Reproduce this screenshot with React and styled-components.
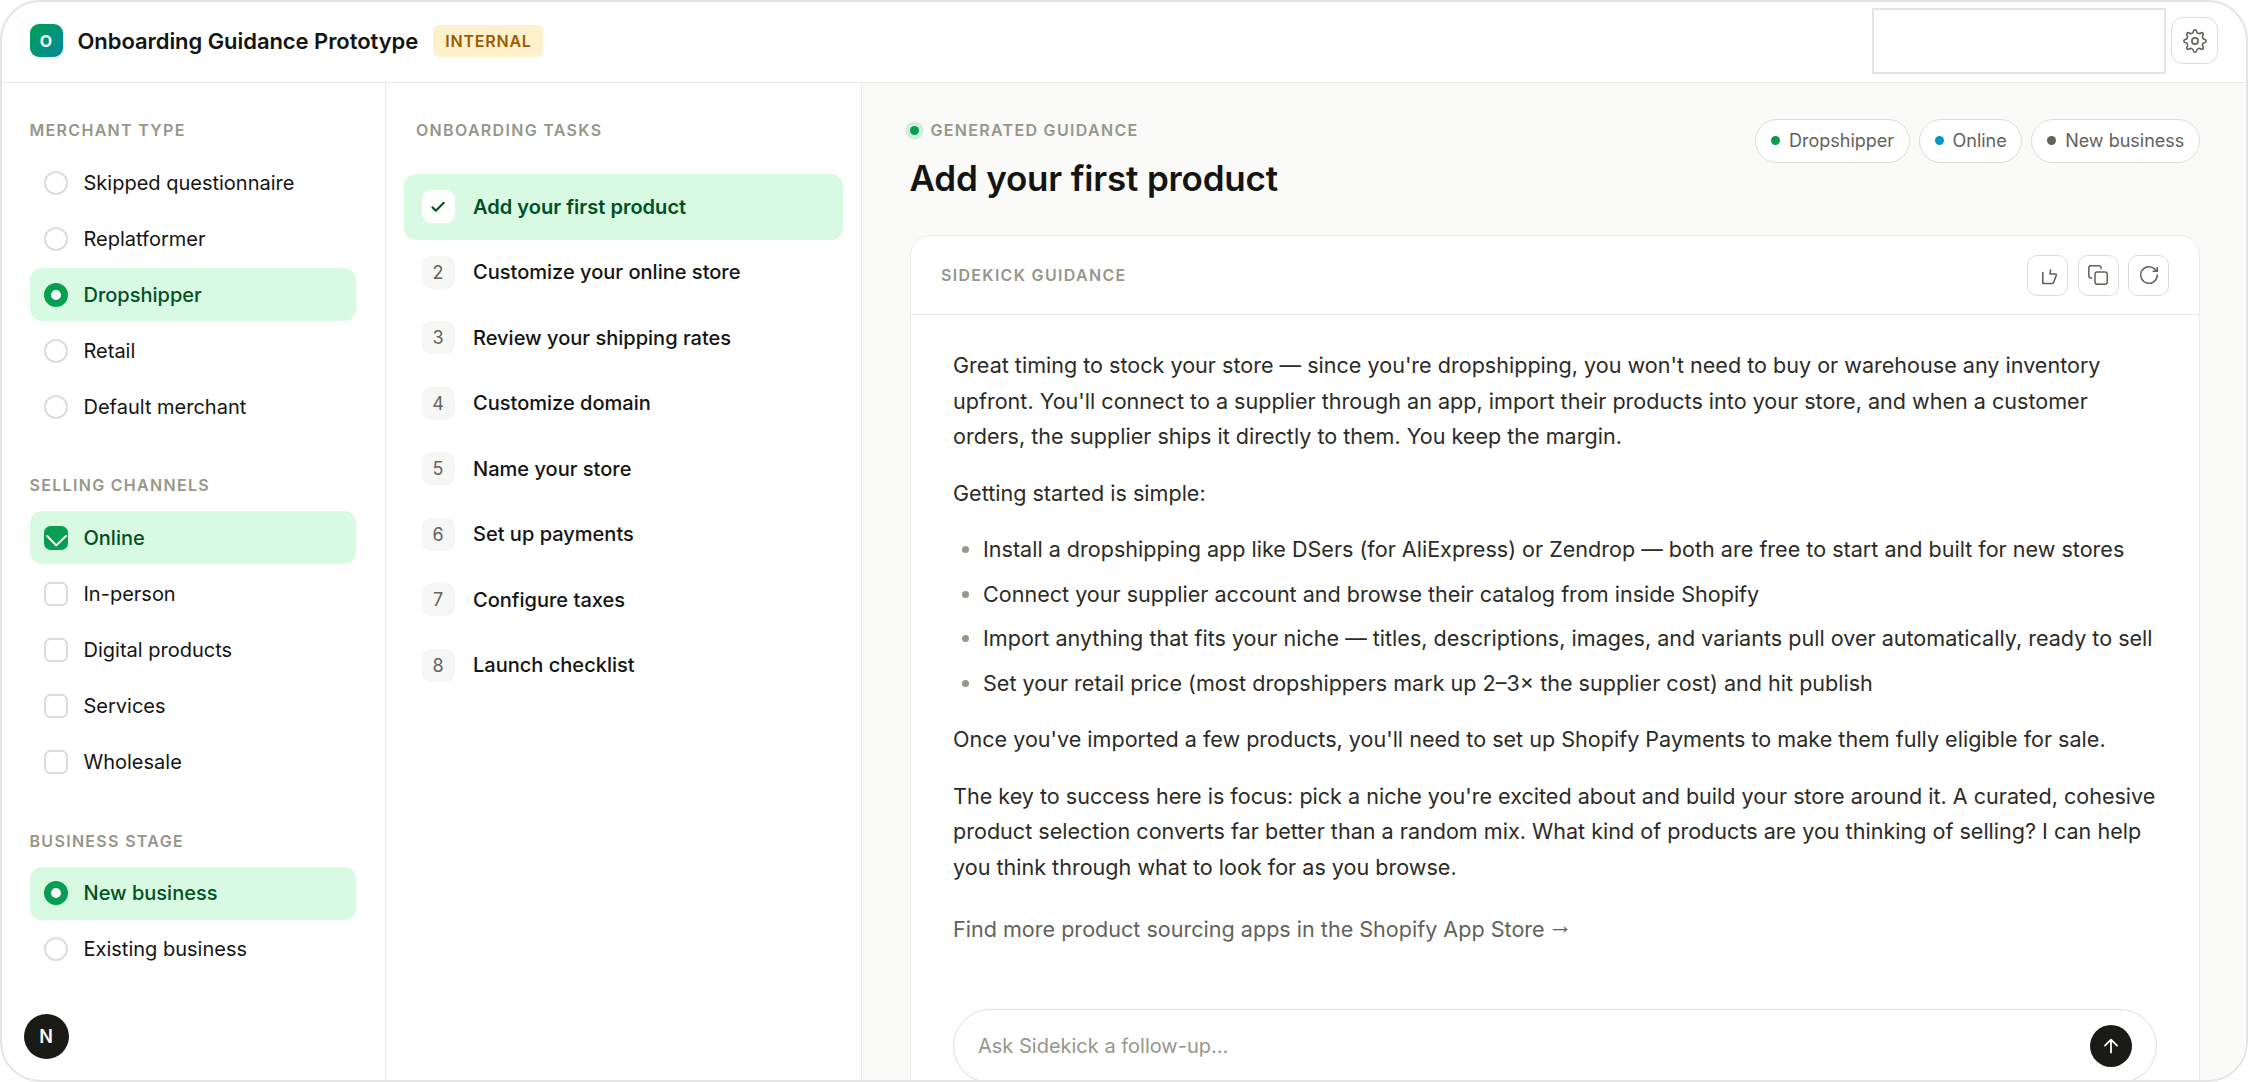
import React, { useState } from 'react';
import styled, { createGlobalStyle, css } from 'styled-components';

const merchantTypes = ['Skipped questionnaire', 'Replatformer', 'Dropshipper', 'Retail', 'Default merchant'];
const channels = ['Online', 'In-person', 'Digital products', 'Services', 'Wholesale'];
const stages = ['New business', 'Existing business'];
const tasks = [
  'Add your first product',
  'Customize your online store',
  'Review your shipping rates',
  'Customize domain',
  'Name your store',
  'Set up payments',
  'Configure taxes',
  'Launch checklist',
];

const App = () => {
  const [merchant, setMerchant] = useState('Dropshipper');
  const [selectedChannels, setSelectedChannels] = useState(['Online']);
  const [stage, setStage] = useState('New business');
  const [task, setTask] = useState(0);
  const [question, setQuestion] = useState('');

  const toggleChannel = (name) => {
    setSelectedChannels((prev) =>
      prev.includes(name) ? prev.filter((c) => c !== name) : [...prev, name]
    );
  };

  return (
    <Frame>
      <GlobalStyle />
      <Header>
        <Logo>O</Logo>
        <AppName>Onboarding Guidance Prototype</AppName>
        <InternalBadge>INTERNAL</InternalBadge>
        <HeaderSlot />
        <SettingsButton aria-label="Settings">
          <SettingsIcon />
        </SettingsButton>
      </Header>

      <Columns>
        <Sidebar>
          <Group>
            <Label>MERCHANT TYPE</Label>
            <Options>
              {merchantTypes.map((name) => (
                <Option key={name} $active={merchant === name} onClick={() => setMerchant(name)}>
                  <Radio $active={merchant === name} />
                  {name}
                </Option>
              ))}
            </Options>
          </Group>

          <Group>
            <Label>SELLING CHANNELS</Label>
            <Options>
              {channels.map((name) => (
                <Option
                  key={name}
                  $active={selectedChannels.includes(name)}
                  onClick={() => toggleChannel(name)}
                >
                  <Checkbox $active={selectedChannels.includes(name)}>
                    {selectedChannels.includes(name) && <CheckboxTick />}
                  </Checkbox>
                  {name}
                </Option>
              ))}
            </Options>
          </Group>

          <Group>
            <Label>BUSINESS STAGE</Label>
            <Options>
              {stages.map((name) => (
                <Option key={name} $active={stage === name} onClick={() => setStage(name)}>
                  <Radio $active={stage === name} />
                  {name}
                </Option>
              ))}
            </Options>
          </Group>
        </Sidebar>

        <TaskColumn>
          <TaskLabel>ONBOARDING TASKS</TaskLabel>
          <TaskList>
            {tasks.map((name, index) => (
              <Task key={name} $active={task === index} onClick={() => setTask(index)}>
                <TaskNumber $active={task === index}>
                  {task === index ? <TaskTick /> : index + 1}
                </TaskNumber>
                {name}
              </Task>
            ))}
          </TaskList>
        </TaskColumn>

        <Main>
          <MainHead>
            <div>
              <Eyebrow>
                <LiveDot />
                <Label>GENERATED GUIDANCE</Label>
              </Eyebrow>
              <Title>{tasks[task]}</Title>
            </div>
            <Chips>
              <Chip $dot="#069f52">{merchant}</Chip>
              {selectedChannels.map((name) => (
                <Chip key={name} $dot="#0098c5">{name}</Chip>
              ))}
              <Chip $dot="#62625b">{stage}</Chip>
            </Chips>
          </MainHead>

          <Card>
            <CardHead>
              <Label>SIDEKICK GUIDANCE</Label>
              <Actions>
                <ActionButton aria-label="Helpful"><ThumbIcon /></ActionButton>
                <ActionButton aria-label="Copy"><CopyIcon /></ActionButton>
                <ActionButton aria-label="Regenerate"><RefreshIcon /></ActionButton>
              </Actions>
            </CardHead>

            <CardBody>
              <p>
                Great timing to stock your store — since you're dropshipping, you won't need to buy or
                warehouse any inventory upfront. You'll connect to a supplier through an app, import
                their products into your store, and when a customer orders, the supplier ships it
                directly to them. You keep the margin.
              </p>
              <p>Getting started is simple:</p>
              <Bullets>
                <li>Install a dropshipping app like DSers (for AliExpress) or Zendrop — both are free to start and built for new stores</li>
                <li>Connect your supplier account and browse their catalog from inside Shopify</li>
                <li>Import anything that fits your niche — titles, descriptions, images, and variants pull over automatically, ready to sell</li>
                <li>Set your retail price (most dropshippers mark up 2–3× the supplier cost) and hit publish</li>
              </Bullets>
              <p>Once you've imported a few products, you'll need to set up Shopify Payments to make them fully eligible for sale.</p>
              <p>
                The key to success here is focus: pick a niche you're excited about and build your store
                around it. A curated, cohesive product selection converts far better than a random mix.
                What kind of products are you thinking of selling? I can help you think through what to
                look for as you browse.
              </p>
              <MoreLink>Find more product sourcing apps in the Shopify App Store <Arrow>→</Arrow></MoreLink>
              <AskBar>
                <AskInput
                  placeholder="Ask Sidekick a follow-up..."
                  value={question}
                  onChange={(e) => setQuestion(e.target.value)}
                />
                <SendButton aria-label="Send"><SendIcon /></SendButton>
              </AskBar>
            </CardBody>
          </Card>
        </Main>
      </Columns>

      <UserBadge>N</UserBadge>
    </Frame>
  );
};

/* Icons */
const gearPoint = (deg, radius = 10) => {
  const a = (deg * Math.PI) / 180;
  return `${(12 + radius * Math.sin(a)).toFixed(2)} ${(12 - radius * Math.cos(a)).toFixed(2)}`;
};

// eight rounded teeth, joined by concave arcs
const gearPath =
  [0, 45, 90, 135, 180, 225, 270, 315].reduce(
    (d, deg) => `${d} A1.6 1.6 0 0 1 ${gearPoint(deg + 9)} A2.6 2.6 0 0 0 ${gearPoint(deg + 36)}`,
    `M${gearPoint(-9)}`
  ) + 'Z';

const SettingsIcon = () => (
  <svg width="24" height="24" viewBox="0 0 24 24" fill="none" stroke="#62625b" strokeWidth="1.6" strokeLinejoin="round">
    <path d={gearPath} />
    <circle cx="12" cy="12" r="3.1" />
  </svg>
);

const ThumbIcon = () => (
  <svg width="20" height="20" viewBox="0 0 20 20" fill="none" stroke="#62625b" strokeWidth="1.6" strokeLinecap="round" strokeLinejoin="round">
    <path d="M4.8 7.5v11h9.4c.6 0 1.1-.4 1.3-1l2.8-7.3c.2-.7-.2-1.2-.9-1.2h-5.4l.6-4" />
  </svg>
);

const CopyIcon = () => (
  <svg width="20" height="20" viewBox="0 0 20 20" fill="none" stroke="#62625b" strokeWidth="1.5" strokeLinecap="round">
    <rect x="7" y="7" width="12.2" height="12.2" rx="2.2" />
    <path d="M3.7 13H3a2.2 2.2 0 0 1-2.2-2.2V3A2.2 2.2 0 0 1 3 .8h7.8A2.2 2.2 0 0 1 13 3v.7" />
  </svg>
);

const RefreshIcon = () => (
  <svg width="20" height="20" viewBox="0 0 20 20" fill="none" stroke="#62625b" strokeWidth="1.5" strokeLinecap="round" strokeLinejoin="round">
    <path d="M18.3 10a8.3 8.3 0 1 1-2.4-5.9l2.4 2.2" />
    <path d="M18.3 2.6v3.7h-4.1" />
  </svg>
);

const TaskTick = () => (
  <svg width="16" height="12" viewBox="0 0 16 12" fill="none" stroke="#00501f" strokeWidth="2" strokeLinecap="round" strokeLinejoin="round">
    <path d="M2.4 6.2l3.4 3.6 8-8" />
  </svg>
);

const CheckboxTick = () => (
  <svg width="24" height="24" viewBox="0 0 24 24" fill="none" stroke="#fff" strokeWidth="2" strokeLinecap="round" strokeLinejoin="round">
    <path d="M3.2 10l9 9.4 9.8-9.4" />
  </svg>
);

const SendIcon = () => (
  <svg width="16" height="16" viewBox="0 0 16 16" fill="none" stroke="#fff" strokeWidth="1.8" strokeLinecap="round" strokeLinejoin="round">
    <path d="M8 14.5V1.8M2 7.6l6-6 6 6" />
  </svg>
);

/* Styles */
const GlobalStyle = createGlobalStyle`
  * {
    box-sizing: border-box;
  }

  body {
    margin: 0;
    background: #fff;
    font-family: Inter, 'Liberation Sans', sans-serif;
    color: #141412;
  }

  button {
    font-family: inherit;
    cursor: pointer;
  }
`;

const Frame = styled.div`
  position: relative;
  display: flex;
  flex-direction: column;
  height: 1082px;
  border: 2px solid #e4e4e4;
  border-radius: 40px;
  overflow: hidden;
  background: #fff;
`;

const Header = styled.header`
  display: flex;
  align-items: center;
  flex: none;
  height: 81px;
  padding: 0 28px 2.5px 27.5px;
  border-bottom: 1.5px solid #e9e9e7;
`;

const Logo = styled.div`
  display: flex;
  align-items: center;
  justify-content: center;
  width: 33px;
  height: 33px;
  border-radius: 9px;
  background: linear-gradient(135deg, #00a04e, #0089a0);
  color: #fff;
  font-size: 16px;
  font-weight: 700;
`;

const AppName = styled.div`
  margin-left: 15px;
  font-size: 22px;
  font-weight: 600;
  letter-spacing: -0.06px;
`;

const InternalBadge = styled.span`
  margin-left: 15px;
  padding: 0 11px 0 12px;
  border-radius: 6px;
  background: #fff1cc;
  color: #9a5b00;
  font-size: 16px;
  font-weight: 600;
  letter-spacing: 0.8px;
  line-height: 32px;
`;

const HeaderSlot = styled.div`
  width: 294px;
  height: 66px;
  margin-left: auto;
  border: 2px solid #e4e4e4;
`;

const SettingsButton = styled.button`
  display: flex;
  align-items: center;
  justify-content: center;
  width: 47px;
  height: 47px;
  margin-left: 5px;
  padding: 0;
  border: 1.5px solid #dcdcd9;
  border-radius: 12px;
  background: #fff;
`;

const Columns = styled.div`
  display: flex;
  flex: 1;
  min-height: 0;
`;

const Sidebar = styled.aside`
  display: flex;
  flex-direction: column;
  gap: 42.3px;
  width: 384px;
  padding: 37px 29.5px 0 27.5px;
  border-right: 1.5px solid #e9e9e7;
`;

const Group = styled.section`
  display: flex;
  flex-direction: column;
  gap: 16px;
`;

const Label = styled.div`
  color: #96968a;
  font-size: 16px;
  font-weight: 600;
  letter-spacing: 1.31px;
  line-height: 20px;
`;

const Options = styled.div`
  display: flex;
  flex-direction: column;
  gap: 3px;
`;

const Option = styled.button`
  display: flex;
  align-items: center;
  gap: 15.5px;
  height: 53px;
  padding: 0 14.5px;
  border: 0;
  border-radius: 12px;
  background: ${({ $active }) => ($active ? '#d8fae3' : 'transparent')};
  color: ${({ $active }) => ($active ? '#00501f' : '#141412')};
  font-size: 20px;
  font-weight: ${({ $active }) => ($active ? 500 : 400)};
`;

const Radio = styled.span`
  width: 24px;
  height: 24px;
  border: ${({ $active }) => ($active ? '7.5px solid #069f52' : '2px solid #dcdcd8')};
  border-radius: 50%;
  background: #fff;
`;

const Checkbox = styled.span`
  display: flex;
  width: 24px;
  height: 24px;
  border-radius: 6.5px;
  background: #fff;
  ${({ $active }) =>
    $active
      ? css`
          background: #069f52;
        `
      : css`
          border: 2px solid #dcdcd8;
        `}
`;

const TaskColumn = styled.nav`
  width: 475.5px;
  padding: 37px 17.5px 0;
  border-right: 1.5px solid #e9e9e7;
`;

const TaskLabel = styled(Label)`
  padding-left: 12.5px;
`;

const TaskList = styled.div`
  display: flex;
  flex-direction: column;
  margin-top: 34px;
`;

const Task = styled.button`
  display: flex;
  align-items: center;
  gap: 18.5px;
  height: 65.5px;
  padding: 0 18px;
  border: 0;
  border-radius: 12px;
  background: ${({ $active }) => ($active ? '#d8fae3' : 'transparent')};
  color: ${({ $active }) => ($active ? '#00501f' : '#141412')};
  font-size: 20.05px;
  font-weight: ${({ $active }) => ($active ? 600 : 500)};
`;

const TaskNumber = styled.span`
  display: flex;
  align-items: center;
  justify-content: center;
  width: 33px;
  height: 33px;
  border-radius: 9px;
  background: ${({ $active }) => ($active ? '#fff' : '#f6f6f4')};
  color: #62625b;
  font-size: 18px;
  font-weight: 400;
`;

const Main = styled.main`
  flex: 1;
  min-width: 0;
  padding: 36px 46px 0 48px;
  background: #fafaf8;
`;

const MainHead = styled.div`
  display: flex;
  justify-content: space-between;
  align-items: flex-start;
`;

const Eyebrow = styled.div`
  display: flex;
  align-items: center;
  gap: 12px;
  margin-top: 1px;
`;

const LiveDot = styled.span`
  width: 9px;
  height: 9px;
  border-radius: 50%;
  background: #069f52;
  box-shadow: 0 0 0 4.5px #d3ecdd;
`;

const Title = styled.h1`
  margin: 15px 0 0;
  font-size: 35px;
  font-weight: 600;
  letter-spacing: -0.18px;
  line-height: 46px;
`;

const Chips = styled.div`
  display: flex;
  gap: 9px;
`;

const Chip = styled.span`
  display: flex;
  align-items: center;
  gap: 9px;
  height: 44px;
  padding: 0 14.7px 1.5px;
  border: 1.5px solid #dcdcd9;
  border-radius: 22px;
  background: #fff;
  color: #62625b;
  font-size: 18px;

  &::before {
    content: '';
    width: 9px;
    height: 9px;
    border-radius: 50%;
    background: ${({ $dot }) => $dot};
  }
`;

const Card = styled.section`
  height: 900px;
  margin-top: 34px;
  border: 1.5px solid #ebebe9;
  border-radius: 20px;
  background: #fff;
`;

const CardHead = styled.div`
  display: flex;
  align-items: center;
  justify-content: space-between;
  height: 79px;
  padding: 0 30px 0 30.5px;
  border-bottom: 1.5px solid #e9e9e7;
`;

const Actions = styled.div`
  display: flex;
  gap: 9.5px;
`;

const ActionButton = styled.button`
  display: flex;
  align-items: center;
  justify-content: center;
  width: 41px;
  height: 41px;
  padding: 0;
  border: 1.5px solid #dcdcd9;
  border-radius: 10px;
  background: #fff;
`;

const CardBody = styled.div`
  padding: 33px 42px 0 42.5px;
  color: #2b2b26;
  font-size: 21.57px;
  line-height: 35.6px;

  p {
    margin: 0 0 20.8px;
  }
`;

const Bullets = styled.ul`
  display: flex;
  flex-direction: column;
  gap: 9px;
  margin: 0 0 20.8px;
  padding-left: 30px;
  white-space: nowrap;

  li::marker {
    color: #96968a;
  }
`;

const MoreLink = styled.a`
  display: block;
  margin-top: 26.5px;
  color: #62625b;
`;

const Arrow = styled.span`
  margin-left: -3px;
  font-family: 'Liberation Sans', sans-serif;
  font-size: 25px;
  line-height: 0;
  vertical-align: 2.5px;
`;

const AskBar = styled.div`
  display: flex;
  align-items: center;
  height: 74px;
  margin-top: 62px;
  padding: 0 24px;
  border: 1.5px solid #dcdcd9;
  border-radius: 37px;
`;

const AskInput = styled.input`
  flex: 1;
  padding: 0;
  border: 0;
  outline: none;
  background: none;
  font-family: inherit;
  font-size: 20px;

  &::placeholder {
    color: #96968a;
  }
`;

const SendButton = styled.button`
  display: flex;
  align-items: center;
  justify-content: center;
  width: 42px;
  height: 42px;
  padding: 0;
  border: 0;
  border-radius: 50%;
  background: #1a1a16;
`;

/* Floats over the bottom of the sidebar */
const UserBadge = styled.div`
  position: absolute;
  left: 21.5px;
  bottom: 21.5px;
  display: flex;
  align-items: center;
  justify-content: center;
  width: 45px;
  height: 45px;
  border-radius: 50%;
  background: #1a1a16;
  color: #fff;
  font-size: 18px;
  font-weight: 600;
`;

export default App;
